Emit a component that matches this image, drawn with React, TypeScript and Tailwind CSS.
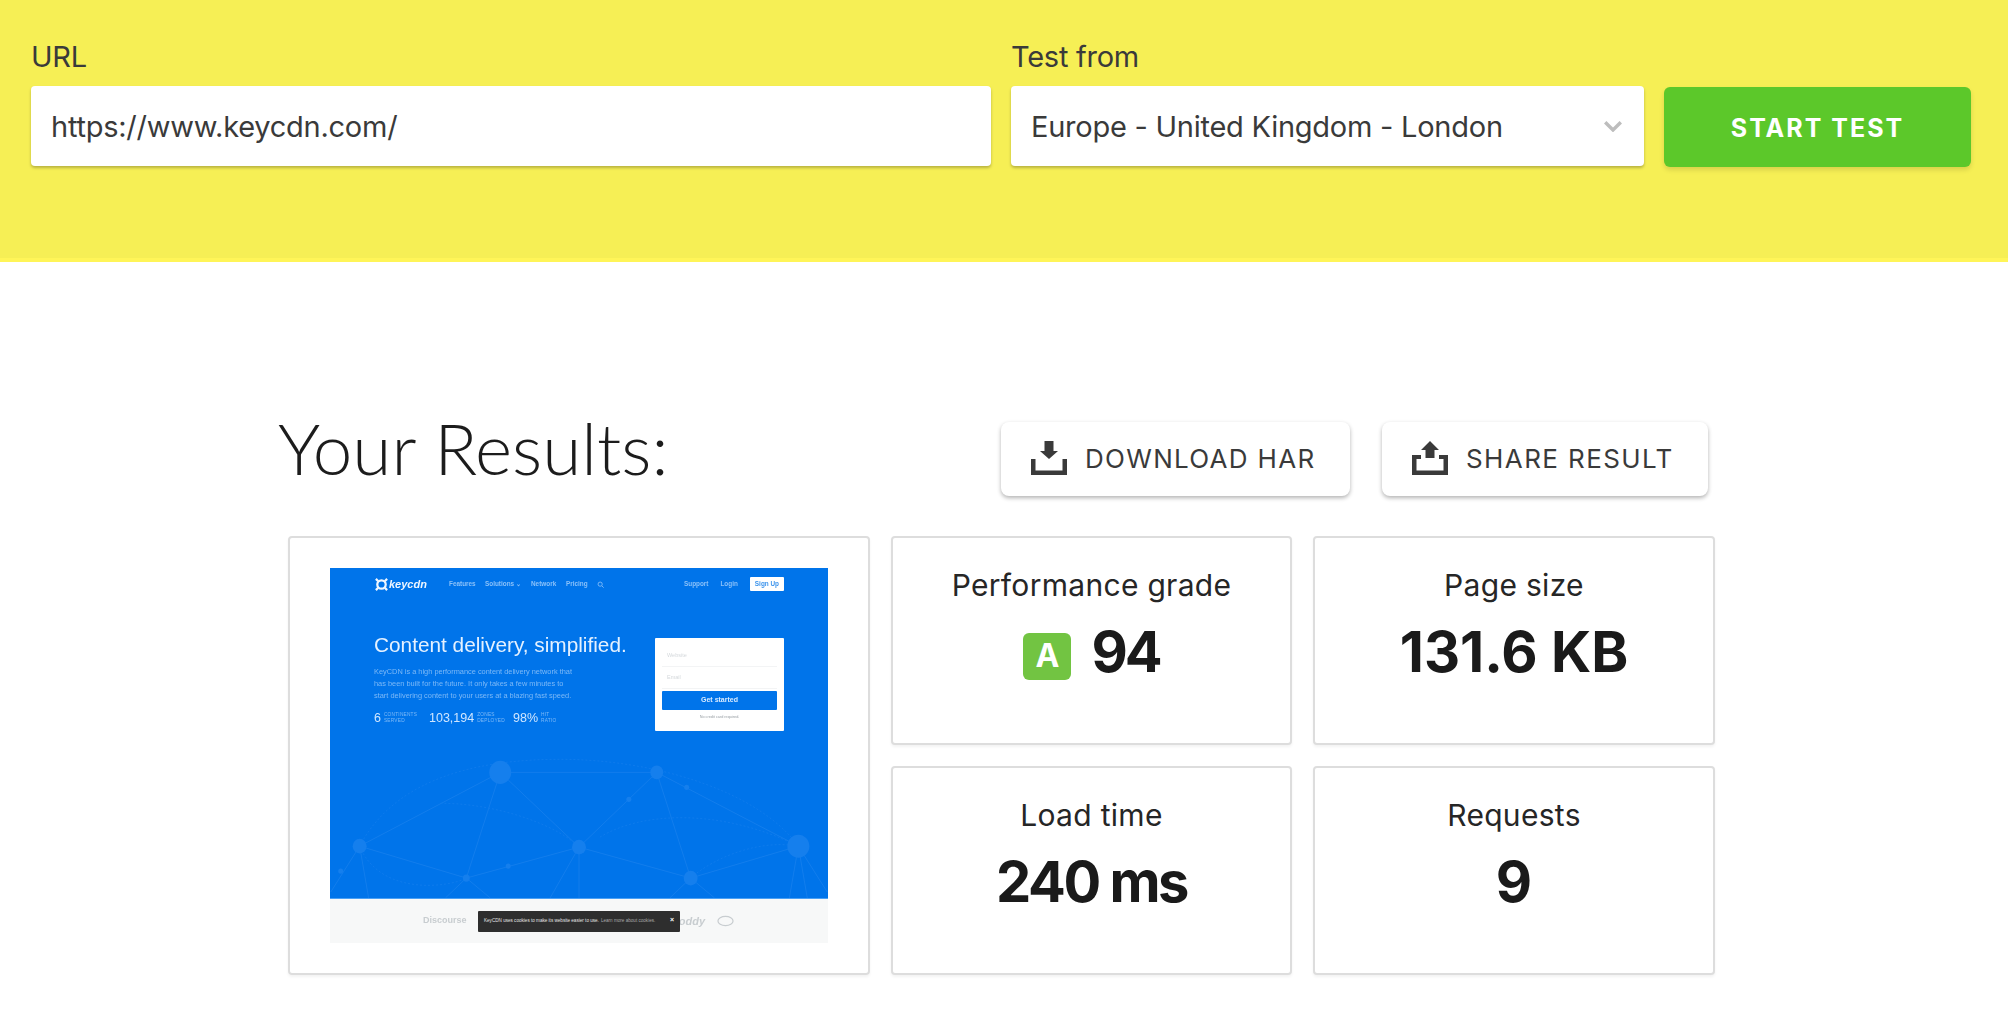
import React from "react";

function DownloadIcon() {
  return (
    <svg viewBox="0 0 36 34" className="w-9 h-[34px] shrink-0" fill="#3a3a3a">
      <path d="M0 18h4.5v11.5h27V18H36v16H0z" />
      <path d="M13.5 0h9v10H27l-9 8-9-8h4.5z" />
    </svg>
  );
}

function ShareIcon() {
  return (
    <svg viewBox="0 0 36 34" className="w-9 h-[34px] shrink-0" fill="#3a3a3a">
      <path d="M0 14h9v4H4.5v11.5h27V18H27v-4h9v20H0z" />
      <path d="M18 0l9 9h-4.5v8h-9V9H9z" />
    </svg>
  );
}

function Network() {
  const lines = [
    [170, 205, 29, 279], [170, 205, 327, 205], [170, 205, 136, 311], [170, 205, 249, 280],
    [327, 205, 249, 280], [327, 205, 361, 311], [327, 205, 469, 279], [29, 279, 136, 311],
    [136, 311, 249, 280], [249, 280, 361, 311], [361, 311, 469, 279], [29, 279, 0, 325],
    [29, 279, 38, 331], [249, 280, 249, 331], [249, 280, 220, 331], [136, 311, 115, 331],
    [136, 311, 160, 331], [361, 311, 340, 331], [361, 311, 385, 331], [469, 279, 460, 331],
    [469, 279, 498, 325], [469, 279, 478, 331],
  ];
  const nodes = [
    [170, 205, 11], [327, 205, 6.5], [29, 279, 7], [249, 280, 7], [469, 279, 11], [361, 311, 7],
    [136, 311, 3.5], [178, 299, 2.5], [299, 232, 2.5], [357, 220, 2.5], [10, 304, 2.5],
  ];
  return (
    <svg viewBox="0 0 498 331" className="absolute inset-0 w-full h-full blur-[0.7px]" fill="none">
      {lines.map((l, i) => (
        <line key={i} x1={l[0]} y1={l[1]} x2={l[2]} y2={l[3]} stroke="#127dec" strokeWidth="1" />
      ))}
      <g stroke="#0e7bec" strokeWidth="1" strokeDasharray="2 2">
        <path d="M29 279C60 220 130 190 240 192C330 194 430 225 469 279" />
        <path d="M29 279C50 330 120 320 136 311" />
        <path d="M110 236C170 236 230 260 249 280" />
        <path d="M270 270C310 245 390 240 469 279" />
        <path d="M361 311C385 290 430 272 469 279" />
      </g>
      {nodes.map((n, i) => (
        <ellipse key={i} cx={n[0]} cy={n[1]} rx={n[2]} ry={n[2] * 1.05} fill="#157fed" />
      ))}
    </svg>
  );
}

function Stat({ value, top, bottom, wide }: { value: string; top: string; bottom: string; wide: string }) {
  return (
    <div className={`flex items-center gap-[3px] ${wide}`}>
      <span className="text-[12.5px] leading-none text-[#cfe6ff]">{value}</span>
      <span className="flex flex-col text-[4.8px] leading-[6px] tracking-[0.2px] text-[#7cb9f7]">
        <span>{top}</span>
        <span>{bottom}</span>
      </span>
    </div>
  );
}

function Thumbnail() {
  return (
    <div className="w-[498px] h-[375px] flex flex-col font-['Liberation_Sans',sans-serif]">
      <div className="relative h-[331px] bg-[#0074ea] px-[44px] overflow-hidden border-b border-[#4aa0f5]">
        <Network />
        <div className="relative blur-[0.35px]">
          <div className="flex items-center h-[32px] text-[6.4px] font-bold text-[#8ac1f9]">
            <span className="w-[75px] flex items-center text-[11px] font-bold italic text-[#eef6ff]">
              <svg viewBox="0 0 16 16" className="w-[15px] h-[15px]" fill="none" stroke="#eef6ff" strokeWidth="2.4">
                <circle cx="8" cy="8" r="4.5" />
                <path d="M2 2l2.5 2.5M14 2l-2.5 2.5M2 14l2.5-2.5M14 14l-2.5-2.5" />
              </svg>
              keycdn
            </span>
            <span className="w-[36px]">Features</span>
            <span className="w-[46px]">Solutions ⌄</span>
            <span className="w-[35px]">Network</span>
            <span className="w-[31px]">Pricing</span>
            <svg viewBox="0 0 10 10" className="w-[7px] h-[7px]" fill="none" stroke="#8ac1f9" strokeWidth="1.2">
              <circle cx="4.5" cy="4.5" r="3" />
              <path d="M7 7l2.5 2.5" />
            </svg>
            <span className="ml-auto mr-[12px]">Support</span>
            <span className="mr-[12px]">Login</span>
            <span className="bg-white text-[#3b93ec] rounded-[1px] px-[5px] py-[4px] leading-none">Sign Up</span>
          </div>
          <div className="flex justify-between">
            <div className="flex flex-col pt-[33px]">
              <div className="text-[20.8px] leading-[24px] text-[#e4f1ff] whitespace-nowrap">Content delivery, simplified.</div>
              <div className="mt-[9px] text-[7.4px] leading-[12px] text-[#7cb9f7] whitespace-nowrap">
                <div>KeyCDN is a high performance content delivery network that</div>
                <div>has been built for the future. It only takes a few minutes to</div>
                <div>start delivering content to your users at a blazing fast speed.</div>
              </div>
              <div className="flex mt-[10px]">
                <Stat value="6" top="CONTINENTS" bottom="SERVED" wide="w-[55px]" />
                <Stat value="103,194" top="ZONES" bottom="DEPLOYED" wide="w-[84px]" />
                <Stat value="98%" top="HIT" bottom="RATIO" wide="w-[45px]" />
              </div>
            </div>
            <div className="w-[129px] h-[93px] mt-[38px] bg-white rounded-[1px] px-[7px] pt-[7px] flex flex-col text-[5.5px] text-[#d5d9dc]">
              <div className="h-[22px] flex items-center px-[5px] border-b border-[#f3f4f5]">Website</div>
              <div className="h-[22px] flex items-center px-[5px] border-b border-[#f3f4f5]">Email</div>
              <div className="h-[19px] mt-[2px] flex items-center justify-center rounded-[1px] bg-[#0074ea] text-[7px] font-bold text-[#d8ebff]">Get started</div>
              <div className="mt-[5px] text-center text-[3.8px] text-[#9aa0a5]">No credit card required.</div>
            </div>
          </div>
        </div>
      </div>
      <div className="relative h-[44px] bg-[#f7f8f8] flex items-center text-[#c8cdd0] font-bold">
        <span className="ml-[93px] text-[9px] blur-[0.4px]">Discourse</span>
        <div className="ml-auto mr-[94px] flex items-center gap-[12px] blur-[0.4px]">
          <span className="text-[11px] italic">oddy</span>
          <svg viewBox="0 0 18 12" className="w-[17px] h-[12px]" fill="none" stroke="#c8cdd0" strokeWidth="1.3">
            <ellipse cx="9" cy="6" rx="8" ry="5" />
          </svg>
        </div>
        <div className="absolute left-[148px] top-[12px] w-[202px] h-[21px] bg-[#2e2e2e] rounded-[1px] flex items-center pl-[6px] text-[4.6px] font-normal text-[#e4e4e4] whitespace-nowrap">
          <span>KeyCDN uses cookies to make its website easier to use.</span>
          <span className="ml-[2px] text-[#a8a8a8]">Learn more about cookies.</span>
          <span className="absolute right-[6px] top-[5px] text-[7px] font-bold text-white leading-none">×</span>
        </div>
      </div>
    </div>
  );
}

function Card({ label, children }: { label: string; children: React.ReactNode }) {
  return (
    <div className="h-[209px] border-2 border-[#dddddd] rounded-[4px] bg-white shadow-[0_2px_3px_rgba(0,0,0,0.05)] flex flex-col items-center pt-[27px]">
      <div className="text-[30px] leading-[40px] tracking-[0.3px] text-[#262626]">{label}</div>
      <div className="mt-[11px] flex items-center h-[72px]">{children}</div>
    </div>
  );
}

export default function App() {
  const value = "text-[56px] leading-[72px] font-bold text-[#1a1a1a]";
  return (
    <div className="min-h-[1016px] bg-white font-['Inter',sans-serif] text-[#3a3a3a]">
      <header className="h-[262px] bg-[#f6ef55] border-b-4 border-[#fff558] pl-[31px] pt-[37px] flex gap-[20px]">
        <div className="w-[960px] flex flex-col">
          <label className="text-[29px] leading-[40px] tracking-[-0.25px] mb-[9px]">URL</label>
          <div className="h-[80px] bg-white rounded-[4px] shadow-[0_2px_3px_rgba(0,0,0,0.25)] px-[20px] pt-[2px] flex items-center text-[29px] tracking-[-0.25px]">
            https://www.keycdn.com/
          </div>
        </div>
        <div className="w-[633px] flex flex-col">
          <label className="text-[29px] leading-[40px] tracking-[-0.25px] mb-[9px]">Test from</label>
          <div className="h-[80px] bg-white rounded-[4px] shadow-[0_2px_3px_rgba(0,0,0,0.25)] pl-[20px] pr-[22px] flex items-center justify-between text-[29px] tracking-[-0.25px]">
            <span className="pt-[2px]">Europe - United Kingdom - London</span>
            <svg viewBox="0 0 18 11" className="w-[18px] h-[11px]" fill="none" stroke="#bdbdbd" strokeWidth="3.4">
              <path d="M1.2 1.2L9 9l7.8-7.8" />
            </svg>
          </div>
        </div>
        <button className="w-[307px] h-[80px] mt-[50px] pt-[3px] bg-[#5cc82a] rounded-[6px] shadow-[0_3px_5px_rgba(0,0,0,0.12)] text-white text-[25px] font-bold tracking-[2px]">
          START TEST
        </button>
      </header>
      <main className="w-[1426px] ml-[288px] pt-[144px]">
        <div className="flex items-start h-[130px]">
          <h1 className="-ml-[10px] -mt-[3px] font-['Lato',sans-serif] font-light text-[71px] leading-[90px] text-[#1c1c1c]">Your Results:</h1>
          <div className="ml-auto mr-[6px] flex gap-[32px] mt-[16px]">
            <button className="w-[349px] h-[74px] rounded-[8px] bg-white shadow-[0_2px_4px_rgba(0,0,0,0.3)] pl-[30px] pb-[2px] flex items-center gap-[18px] text-[26px] tracking-[1.3px] text-[#3a3a3a]">
              <DownloadIcon />
              DOWNLOAD HAR
            </button>
            <button className="w-[326px] h-[74px] rounded-[8px] bg-white shadow-[0_2px_4px_rgba(0,0,0,0.3)] pl-[30px] pb-[2px] flex items-center gap-[18px] text-[26px] tracking-[1.4px] text-[#3a3a3a]">
              <ShareIcon />
              SHARE RESULT
            </button>
          </div>
        </div>
        <div className="grid grid-cols-[582px_401px_402px] grid-rows-[209px_209px] gap-[21px]">
          <div className="row-span-2 border-2 border-[#dddddd] rounded-[4px] shadow-[0_2px_3px_rgba(0,0,0,0.05)] flex items-center justify-center">
            <Thumbnail />
          </div>
          <Card label="Performance grade">
            <span className="w-[48px] h-[47px] mt-[8px] rounded-[6px] bg-[#72c442] mr-[20px] flex items-center justify-center text-[32px] font-bold text-white">A</span>
            <span className={`${value} tracking-[-3px]`}>94</span>
          </Card>
          <Card label="Page size">
            <span className={value}>131.6 KB</span>
          </Card>
          <Card label="Load time">
            <span className={`${value} tracking-[-2.5px]`}>240 ms</span>
          </Card>
          <Card label="Requests">
            <span className={value}>9</span>
          </Card>
        </div>
      </main>
    </div>
  );
}
